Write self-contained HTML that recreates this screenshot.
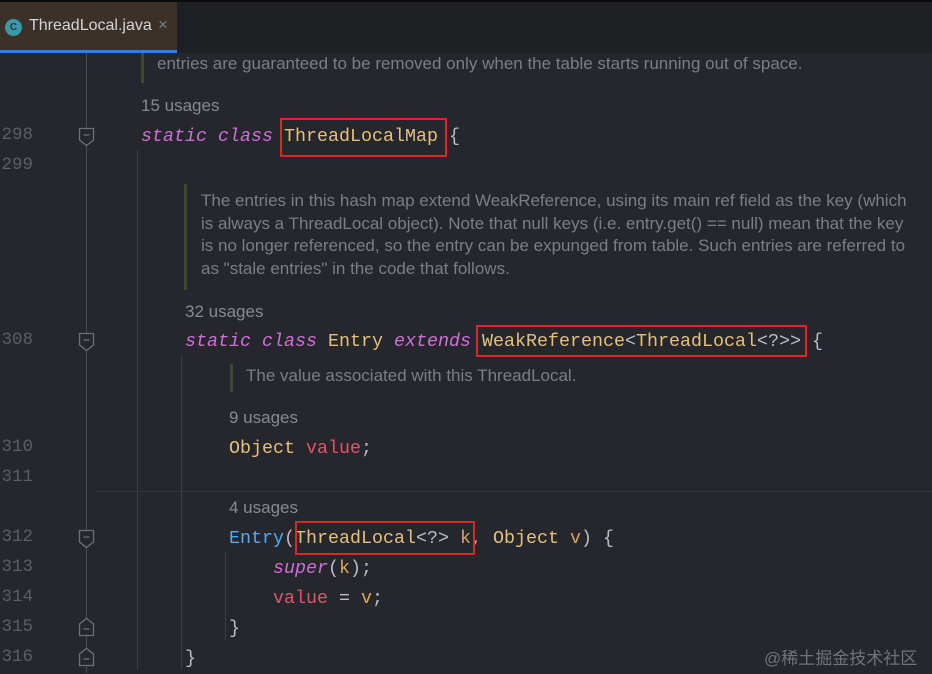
<!DOCTYPE html>
<html><head><meta charset="utf-8"><style>
*{margin:0;padding:0;box-sizing:border-box}
body{width:932px;height:673px;background:#25272c;position:relative;overflow:hidden;font-family:"Liberation Mono",monospace}
.top{position:absolute;left:0;top:0;width:932px;height:53px;background:#1f2024;border-top:2px solid #0c0c0d}
.tab{position:absolute;left:0;top:2px;width:177px;height:51px;background:#3b3128;border-bottom:3px solid #3d7ae0}
.tab .ic{position:absolute;left:5px;top:17px;width:17px;height:17px;border-radius:50%;background:#3b98a8;color:#1d3a44;font:bold 10px "Liberation Sans",sans-serif;text-align:center;line-height:17px}
.tab .t{position:absolute;left:29px;top:15px;color:#d3d5da;font:16px "Liberation Sans",sans-serif}
.tab .x{position:absolute;left:158px;top:13px;color:#7b7e85;font:17px "Liberation Sans",sans-serif}
.ln{position:absolute;left:-3px;width:36px;text-align:right;color:#5a5e66;font-size:17.5px}
.code{position:absolute;font-size:18.33px;color:#bcbec4;white-space:pre;line-height:30px}
.doc{position:absolute;color:#7a7e85;font:17px/22.5px "Liberation Sans",sans-serif;white-space:pre}
.us{position:absolute;color:#868a91;font:17px "Liberation Sans",sans-serif}
.kw{color:#cf6fd9;font-style:italic}
.cl{color:#e5c07b}
.fn{color:#56a8f5}
.fld{color:#e0546b}
.pm{color:#d8a560}
.vl{position:absolute;width:1px;background:#3a3d43}
.bar{position:absolute;width:3px;background:#414733}
.box{position:absolute;border:2px solid #e0242a}
.fold{position:absolute;left:78px;width:17px;height:20px}
</style></head><body>
<div class="top"></div>
<div class="tab"><div class="ic">C</div><div class="t">ThreadLocal.java</div><div class="x">×</div></div>

<div class="vl" style="left:86px;top:53px;height:620px;background:#4a4d53"></div>
<div class="vl" style="left:137px;top:150px;height:520px"></div>
<div class="vl" style="left:181px;top:355px;height:315px"></div>
<div class="vl" style="left:225px;top:552px;height:88px"></div>
<div class="vl" style="left:96px;top:491px;width:836px;height:1px;background:#33363c"></div>

<div class="bar" style="left:141px;top:53px;height:30px"></div>
<div class="bar" style="left:184px;top:184px;height:106px"></div>
<div class="bar" style="left:230px;top:364px;height:28px"></div>

<div class="doc" style="left:157px;top:53px">entries are guaranteed to be removed only when the table starts running out of space.</div>
<div class="us" style="left:141px;top:96px">15 usages</div>
<div class="doc" style="left:201px;top:190px">The entries in this hash map extend WeakReference, using its main ref field as the key (which
is always a ThreadLocal object). Note that null keys (i.e. entry.get() == null) mean that the key
is no longer referenced, so the entry can be expunged from table. Such entries are referred to
as "stale entries" in the code that follows.</div>
<div class="us" style="left:185px;top:302px">32 usages</div>
<div class="doc" style="left:246px;top:365px">The value associated with this ThreadLocal.</div>
<div class="us" style="left:229px;top:408px">9 usages</div>
<div class="us" style="left:229px;top:498px">4 usages</div>

<div class="ln" style="top:125px">298</div>
<div class="ln" style="top:155px">299</div>
<div class="ln" style="top:330px">308</div>
<div class="ln" style="top:437px">310</div>
<div class="ln" style="top:467px">311</div>
<div class="ln" style="top:527px">312</div>
<div class="ln" style="top:557px">313</div>
<div class="ln" style="top:587px">314</div>
<div class="ln" style="top:617px">315</div>
<div class="ln" style="top:647px">316</div>

<svg class="fold" style="top:127px" viewBox="0 0 17 20"><path d="M1.5 1.5H15.5V13L8.5 18.5L1.5 13Z" fill="#25272c" stroke="#6b6f76" stroke-width="1.3"/><path d="M5.5 8H11.5" stroke="#6b6f76" stroke-width="1.3"/></svg>
<svg class="fold" style="top:332px" viewBox="0 0 17 20"><path d="M1.5 1.5H15.5V13L8.5 18.5L1.5 13Z" fill="#25272c" stroke="#6b6f76" stroke-width="1.3"/><path d="M5.5 8H11.5" stroke="#6b6f76" stroke-width="1.3"/></svg>
<svg class="fold" style="top:529px" viewBox="0 0 17 20"><path d="M1.5 1.5H15.5V13L8.5 18.5L1.5 13Z" fill="#25272c" stroke="#6b6f76" stroke-width="1.3"/><path d="M5.5 8H11.5" stroke="#6b6f76" stroke-width="1.3"/></svg>
<svg class="fold" style="top:617px" viewBox="0 0 17 20"><path d="M1.5 18.5H15.5V7L8.5 1.5L1.5 7Z" fill="#25272c" stroke="#6b6f76" stroke-width="1.3"/><path d="M5.5 12H11.5" stroke="#6b6f76" stroke-width="1.3"/></svg>
<svg class="fold" style="top:647px" viewBox="0 0 17 20"><path d="M1.5 18.5H15.5V7L8.5 1.5L1.5 7Z" fill="#25272c" stroke="#6b6f76" stroke-width="1.3"/><path d="M5.5 12H11.5" stroke="#6b6f76" stroke-width="1.3"/></svg>

<div class="code" style="left:141px;top:122px"><span class="kw">static</span> <span class="kw">class</span> <span class="cl">ThreadLocalMap</span> {</div>
<div class="code" style="left:185px;top:327px"><span class="kw">static</span> <span class="kw">class</span> <span class="cl">Entry</span> <span class="kw">extends</span> <span class="cl">WeakReference</span>&lt;<span class="cl">ThreadLocal</span>&lt;?&gt;&gt; {</div>
<div class="code" style="left:229px;top:434px"><span class="cl">Object</span> <span class="fld">value</span>;</div>
<div class="code" style="left:229px;top:524px"><span class="fn">Entry</span>(<span class="cl">ThreadLocal</span>&lt;?&gt; <span class="pm">k</span>, <span class="cl">Object</span> <span class="pm">v</span>) {</div>
<div class="code" style="left:273px;top:554px"><span class="kw">super</span>(<span class="pm">k</span>);</div>
<div class="code" style="left:273px;top:584px"><span class="fld">value</span> = <span class="pm">v</span>;</div>
<div class="code" style="left:229px;top:614px">}</div>
<div class="code" style="left:185px;top:644px">}</div>

<div class="box" style="left:280px;top:118px;width:167px;height:39px"></div>
<div class="box" style="left:476px;top:325px;width:331px;height:32px"></div>
<div class="box" style="left:295px;top:521px;width:180px;height:34px"></div>

<div style="position:absolute;left:764px;top:644px;color:#70737a;font:17px 'Liberation Sans','Noto Sans CJK SC',sans-serif">@稀土掘金技术社区</div>
</body></html>
